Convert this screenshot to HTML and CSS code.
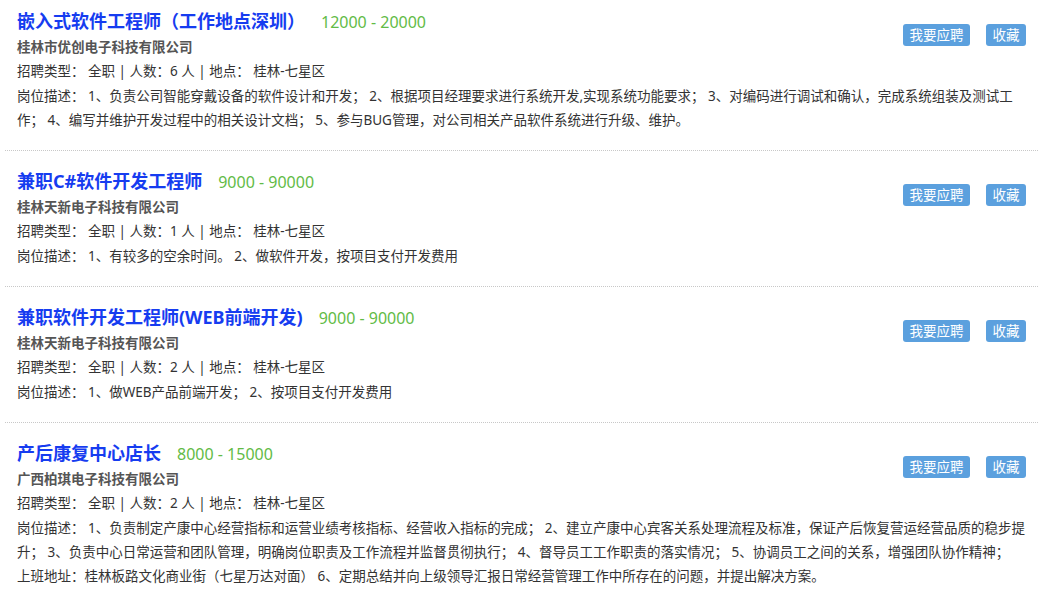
FILE: index.html
```html
<!DOCTYPE html>
<html lang="zh-CN">
<head>
  <meta charset="UTF-8" />
  <title>招聘信息</title>
  <link rel="stylesheet" href="styles.css">
</head>
<body>

  <div class="job-list">

    <div class="job">
      <div class="actions">
        <button class="btn">我要应聘</button>
        <button class="btn">收藏</button>
      </div>
      <h2 class="job-title">嵌入式软件工程师（工作地点深圳）<span class="salary">12000 - 20000</span></h2>
      <div class="company">桂林市优创电子科技有限公司</div>
      <div class="info">招聘类型： 全职 | 人数：6 人 | 地点： 桂林-七星区</div>
      <div class="desc">岗位描述： 1、负责公司智能穿戴设备的软件设计和开发； 2、根据项目经理要求进行系统开发,实现系统功能要求； 3、对编码进行调试和确认，完成系统组装及测试工作； 4、编写并维护开发过程中的相关设计文档； 5、参与BUG管理，对公司相关产品软件系统进行升级、维护。</div>
    </div>

    <div class="job">
      <div class="actions">
        <button class="btn">我要应聘</button>
        <button class="btn">收藏</button>
      </div>
      <h2 class="job-title">兼职C#软件开发工程师<span class="salary">9000 - 90000</span></h2>
      <div class="company">桂林天新电子科技有限公司</div>
      <div class="info">招聘类型： 全职 | 人数：1 人 | 地点： 桂林-七星区</div>
      <div class="desc">岗位描述： 1、有较多的空余时间。 2、做软件开发，按项目支付开发费用</div>
    </div>

    <div class="job">
      <div class="actions">
        <button class="btn">我要应聘</button>
        <button class="btn">收藏</button>
      </div>
      <h2 class="job-title">兼职软件开发工程师(WEB前端开发)<span class="salary">9000 - 90000</span></h2>
      <div class="company">桂林天新电子科技有限公司</div>
      <div class="info">招聘类型： 全职 | 人数：2 人 | 地点： 桂林-七星区</div>
      <div class="desc">岗位描述： 1、做WEB产品前端开发； 2、按项目支付开发费用</div>
    </div>

    <div class="job">
      <div class="actions">
        <button class="btn">我要应聘</button>
        <button class="btn">收藏</button>
      </div>
      <h2 class="job-title">产后康复中心店长<span class="salary">8000 - 15000</span></h2>
      <div class="company">广西柏琪电子科技有限公司</div>
      <div class="info">招聘类型： 全职 | 人数：2 人 | 地点： 桂林-七星区</div>
      <div class="desc">岗位描述： 1、负责制定产康中心经营指标和运营业绩考核指标、经营收入指标的完成； 2、建立产康中心宾客关系处理流程及标准，保证产后恢复营运经营品质的稳步提升； 3、负责中心日常运营和团队管理，明确岗位职责及工作流程并监督贯彻执行； 4、督导员工工作职责的落实情况； 5、协调员工之间的关系，增强团队协作精神；<br>上班地址：桂林板路文化商业街（七星万达对面） 6、定期总结并向上级领导汇报日常经营管理工作中所存在的问题，并提出解决方案。</div>
    </div>

  </div>

</body>
</html>
```

FILE: styles.css
```css
body {
  margin: 0;
  font-family: "Noto Sans", "Noto Sans CJK SC", sans-serif;
  font-size: 13.5px;
  color: #333;
  background: #fff;
}
.job-list {
  width: 1033px;
  margin: -9px 0 0 5px;
}
.job {
  padding: 17px 12px 18px 12px;
  border-bottom: 1px dotted #c8c8c8;
}
.job-title {
  margin: 0;
  font-size: 18px;
  line-height: 26px;
  font-weight: bold;
  color: #163cf0;
}
.salary {
  margin-left: 16px;
  font-size: 16px;
  font-weight: normal;
  color: #62bb46;
}
.company {
  font-weight: bold;
  color: #555;
  line-height: 24px;
}
.info {
  line-height: 25px;
}
.desc {
  line-height: 24px;
}
.actions {
  float: right;
  display: flex;
  gap: 16px;
  margin-top: 16px;
}
.btn {
  height: 22px;
  padding: 0 6.5px;
  border: none;
  border-radius: 3px;
  background: #5ba0de;
  color: #fff;
  font-family: inherit;
  font-size: 13.5px;
  line-height: 22px;
  cursor: pointer;
}
```
